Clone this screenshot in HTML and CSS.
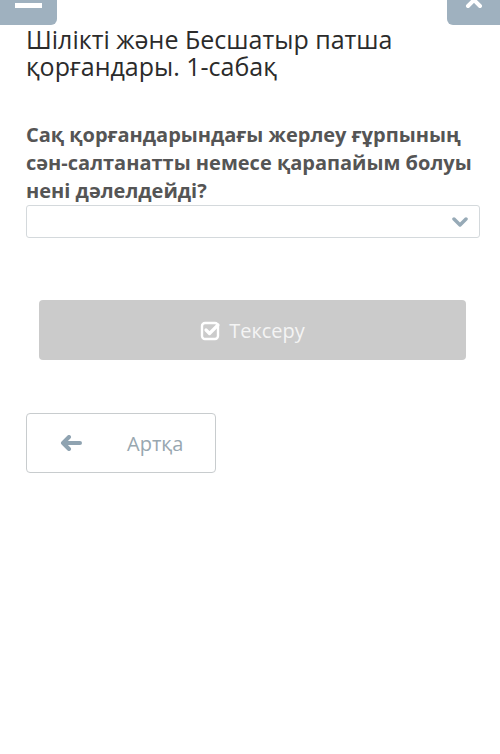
FILE: index.html
```html
<!DOCTYPE html>
<html lang="kk">
<head>
    <meta charset="UTF-8">
    <title>Шілікті және Бесшатыр патша қорғандары</title>
    <link rel="stylesheet" href="styles.css">
</head>
<body>
<div class="page">
    <!--жоғарғы батырмалар-->
    <div class="topbar">
        <span class="tb-btn menu"><span class="bar"></span></span>
        <span class="tb-btn close">
            <svg width="18" height="10" viewBox="0 0 18 10"><path d="M3 -6 L15 6 M15 -6 L3 6" stroke="#fff" stroke-width="4" stroke-linecap="round"/></svg>
        </span>
    </div>

    <h1 class="title">Шілікті және Бесшатыр патша қорғандары. 1-сабақ</h1>

    <div class="question">Сақ қорғандарындағы жерлеу ғұрпының сән-салтанатты немесе қарапайым болуы нені дәлелдейді?</div>

    <div class="select">
        <svg width="16" height="12" viewBox="0 0 16 12"><path d="M2 3 L8 9 L14 3" fill="none" stroke="#97aab7" stroke-width="3.5" stroke-linecap="round" stroke-linejoin="round"/></svg>
    </div>

    <div class="check-row">
        <div class="check-btn">
            <svg width="22" height="22" viewBox="0 0 22 22">
                <rect x="2" y="4" width="16" height="16" rx="3" fill="none" stroke="#fff" stroke-width="2.4"/>
                <path d="M6 11 L9.5 14.5 L18 6" fill="none" stroke="#fff" stroke-width="3.2" stroke-linecap="round" stroke-linejoin="round"/>
            </svg>
            <span>Тексеру</span>
        </div>
    </div>

    <div class="back-btn">
        <svg width="22" height="16" viewBox="0 0 22 16"><path d="M9 2 L3 8 L9 14 M3 8 L20 8" fill="none" stroke="#8fa3b1" stroke-width="4" stroke-linecap="round" stroke-linejoin="round"/></svg>
        <span>Артқа</span>
    </div>
</div>
</body>
</html>
```

FILE: styles.css
```css
* {
    margin: 0;
    padding: 0;
    box-sizing: border-box;
}

body {
    background: #fff;
    font-family: "Open Sans", "Noto Sans", sans-serif;
    color: #333;
}

.page {
    width: 500px;
    height: 754px;
}

/*жоғарғы батырмалар*/
.topbar {
    display: flex;
    justify-content: space-between;
    height: 25px;
}

.tb-btn {
    display: flex;
    justify-content: center;
    width: 57px;
    height: 25px;
    background-color: #9fb1bf;
}

.menu {
    border-radius: 0 0 6px 0;
}

.menu .bar {
    width: 27px;
    height: 5px;
    margin-top: 3px;
    background: #fff;
}

.close {
    width: 53px;
    border-radius: 0 0 0 6px;
}

.title {
    font-weight: 400;
    font-size: 25px;
    line-height: 27px;
    color: #2b2b2b;
    padding: 1px 80px 0 26px;
}

.question {
    font-weight: 700;
    font-size: 20px;
    line-height: 28px;
    color: #555;
    padding: 41px 18px 0 26px;
}

.select {
    display: flex;
    justify-content: flex-end;
    align-items: center;
    height: 33px;
    margin: 0 20px 0 26px;
    padding-right: 11px;
    border: 1px solid #d4d9dc;
    border-radius: 3px;
}

.check-row {
    padding: 62px 34px 0 39px;
}

.check-btn {
    display: flex;
    justify-content: center;
    align-items: center;
    gap: 7px;
    height: 60px;
    background-color: #cbcbcb;
    border-radius: 4px;
    color: #f4f4f4;
    font-size: 20px;
}

.back-btn {
    display: flex;
    align-items: center;
    width: 190px;
    height: 60px;
    margin: 53px 0 0 26px;
    padding-left: 33px;
    gap: 45px;
    border: 1px solid #c8ccce;
    border-radius: 4px;
    color: #98a7b0;
    font-size: 20px;
}
```
